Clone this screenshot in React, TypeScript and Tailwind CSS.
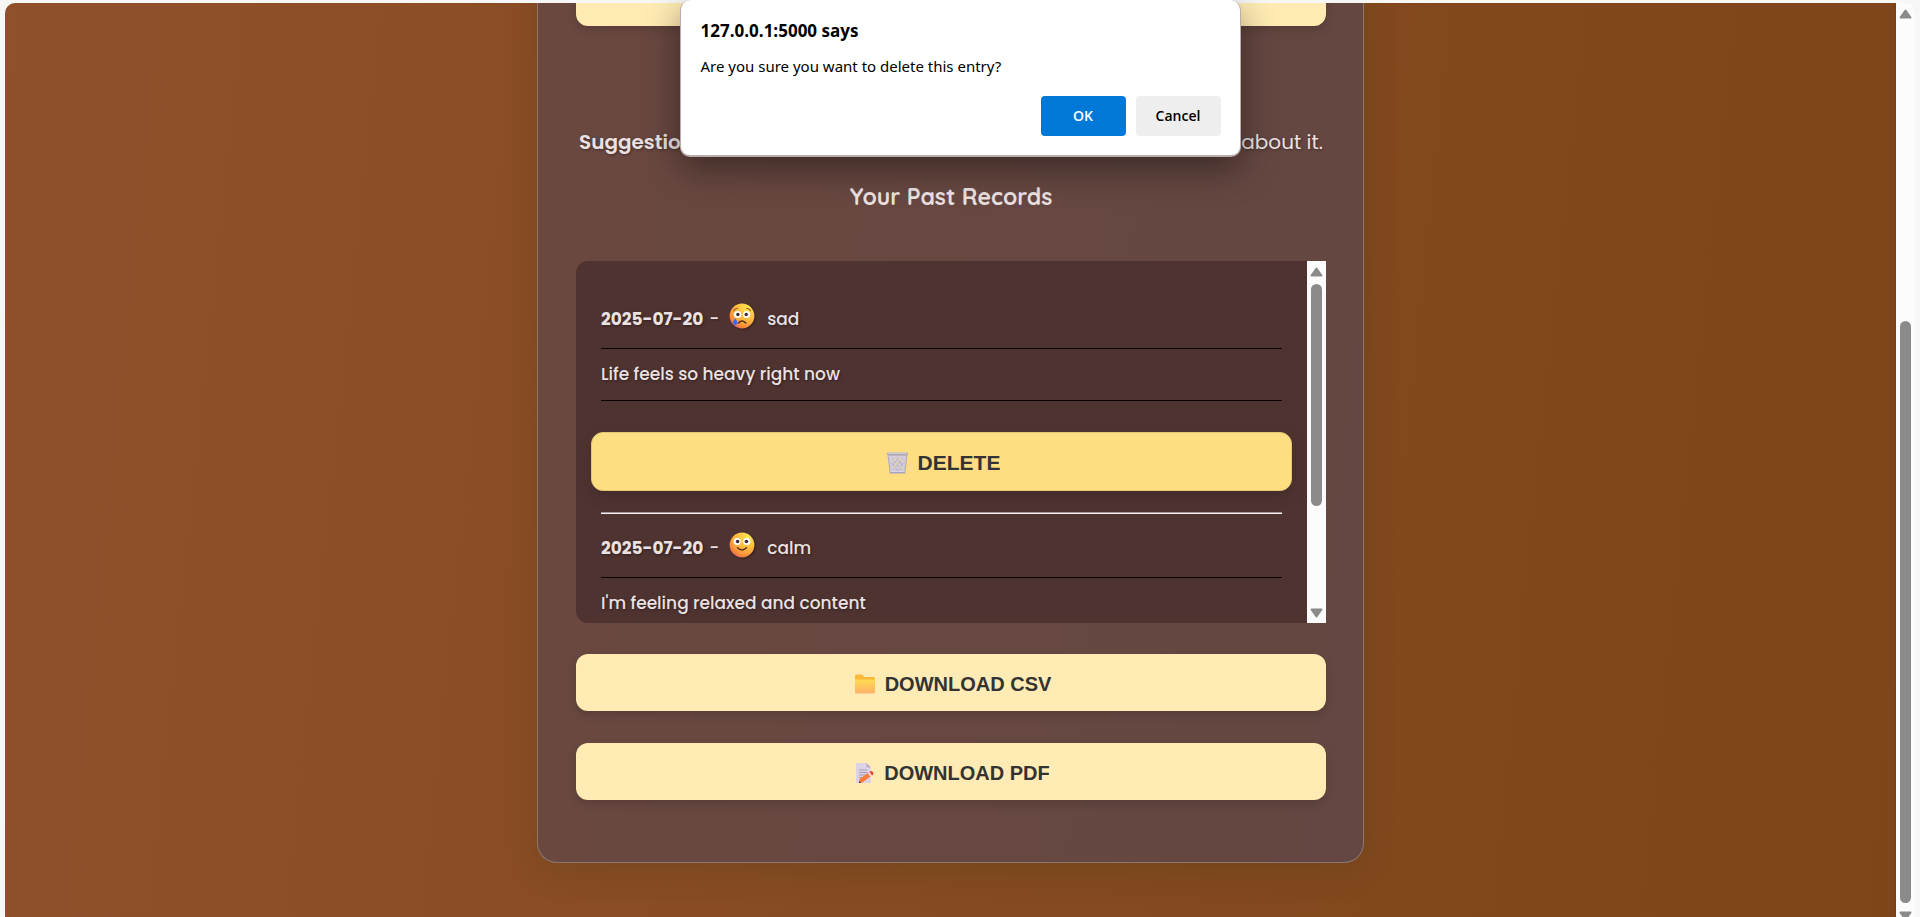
import type { ReactNode } from "react";

const bodyFont = "font-['Poppins','Inter',sans-serif]";

function ArrowUp() {
  return (
    <svg width="13" height="10" viewBox="0 0 13 10" className="shrink-0" aria-hidden="true">
      <path d="M6.500 1.500 11.500 8.500H1.500Z" fill="#8b8b8b" stroke="#8b8b8b" strokeWidth="2" strokeLinejoin="round" />
    </svg>
  );
}

function ArrowDown() {
  return (
    <svg width="13" height="10" viewBox="0 0 13 10" className="shrink-0" aria-hidden="true">
      <path d="M6.500 8.500 1.500 1.500h10Z" fill="#8b8b8b" stroke="#8b8b8b" strokeWidth="2" strokeLinejoin="round" />
    </svg>
  );
}

function Face({ mood }: { mood: "sad" | "calm" }) {
  const id = `face-${mood}`;
  return (
    <svg width="26" height="26" viewBox="0 0 26 26" className="drop-shadow-[1px_1px_1px_rgba(0,0,0,0.4)]" role="img" aria-label={mood}>
      <defs>
        <radialGradient id={id} cx="0.75" cy="0.15" r="1">
          <stop offset="0" stopColor="#ffe650" />
          <stop offset="0.6" stopColor="#ffae3b" />
          <stop offset="0.85" stopColor="#f5813f" />
          <stop offset="1" stopColor="#e0508a" />
        </radialGradient>
      </defs>
      <circle cx="13" cy="13" r="12.4" fill={`url(#${id})`} />
      {mood === "sad" ? (
        <>
          <circle cx="8.6" cy="11.5" r="3.6" fill="#fff" />
          <circle cx="17.5" cy="11.5" r="3.6" fill="#fff" />
          <circle cx="8.9" cy="11.5" r="1.7" fill="#402a32" />
          <circle cx="17.2" cy="11.5" r="1.7" fill="#402a32" />
          <path d="M4.6 7.6Q6 5.4 8.6 5.2M17.6 5.2q2.6.2 4 2.4" fill="none" stroke="#9a5a2a" strokeWidth="1.1" strokeLinecap="round" />
          <path d="M9.4 20Q13 16.2 16.8 20" fill="none" stroke="#5a2a20" strokeWidth="1.5" strokeLinecap="round" />
          <path d="M6.2 15.5q3 3.6 1.8 5.6-1.8 2-3.6 0-1.2-2 1.8-5.6Z" fill="#2f6bf2" />
        </>
      ) : (
        <>
          <circle cx="8.2" cy="9.5" r="3.6" fill="#fff" />
          <circle cx="17.8" cy="9.5" r="3.6" fill="#fff" />
          <circle cx="8.6" cy="9.5" r="1.8" fill="#402a32" />
          <circle cx="17.4" cy="9.5" r="1.8" fill="#402a32" />
          <path d="M8.5 15.8Q13 20 17.5 15.8" fill="none" stroke="#5a2a20" strokeWidth="1.4" strokeLinecap="round" />
        </>
      )}
    </svg>
  );
}

function Bin() {
  return (
    <svg width="21" height="22" viewBox="0 0 20 21" aria-hidden="true">
      <path d="M1 3h18l-2 17H3Z" fill="#d3ccda" />
      <path d="m5 6 9 11M9 5l6 8M4 10l6 8M15 6 6 17M11 5l-6 8M16 10l-6 8" stroke="#b3abc0" strokeWidth="0.8" />
      <path d="M6.5 7H8v1.800H6.500ZM12 7h1.500v1.800H12ZM9 10.300h1.500V12H9ZM6.500 13.500H8v1.800H6.500ZM12 13.500h1.500v1.800H12ZM9.200 5h1.300v1.300H9.200Z" fill="#f4dc96" />
      <path d="M1 3.500 3 19M19 3.500 17 19" stroke="#b0a8c2" strokeWidth="1" />
      <rect x="0" y="0.500" width="20" height="3" rx="1" fill="#b3abb8" />
      <rect x="1" y="0.500" width="18" height="1.200" rx="0.600" fill="#d5cedc" />
      <rect x="2.500" y="18" width="15" height="2.500" fill="#a9a0c6" />
      <rect x="3" y="18" width="14" height="1" fill="#e0dbe6" />
    </svg>
  );
}

function Folder() {
  return (
    <svg width="20" height="20" viewBox="0 0 20 20" aria-hidden="true">
      <defs>
        <linearGradient id="folder" x1="0" y1="0" x2="0" y2="1">
          <stop offset="0" stopColor="#ffda4e" />
          <stop offset="1" stopColor="#ffb169" />
        </linearGradient>
      </defs>
      <path d="M0 2q0-1.500 1.500-1.500H7L9.500 3H18.500Q20 3 20 4.500V10H0Z" fill="#fbb93c" />
      <path d="M0 5.500h20V18q0 1.500-1.500 1.500h-17Q0 19.500 0 18Z" fill="url(#folder)" />
    </svg>
  );
}

function Memo() {
  return (
    <svg width="18" height="20" viewBox="0 0 18 20" aria-hidden="true">
      <path d="M0 0h10.500L15 4.500V20H0Z" fill="#dcd3e6" />
      <path d="M10.500 0 15 4.500h-4.500Z" fill="#b9adc6" />
      <path d="M3 7h8M3 9.500h8.500M3 12h7M3 14.500h3" stroke="#a79cb6" strokeWidth="1" />
      <path d="m3.500 16 9-6.500 2.700 3.500-9 6.500L3 20Z" fill="#fc7b3d" />
      <path d="m11.600 10 1.600-1.200 2.800 3.700-1.600 1.200Z" fill="#f3d8dd" />
      <path d="m13.300 8.800q2-1.500 3.500.2t-.7 3.500Z" fill="#f8413f" />
      <path d="m3 20 .3-2 2 1.400Z" fill="#4a2b35" />
    </svg>
  );
}

function WideButton({ icon, label, children }: { icon?: ReactNode; label?: string; children?: ReactNode }) {
  return (
    <button
      type="button"
      aria-label={label}
      className="flex h-[57px] w-full shrink-0 items-center justify-center gap-[10px] rounded-xl bg-[#ffebb3] pt-0.5 pl-1 font-['Liberation_Sans',Arial,sans-serif] text-xl font-bold text-[#333] shadow-[0_4px_10px_rgba(0,0,0,0.15)]"
    >
      {icon}
      {children}
    </button>
  );
}

function EntryHead({ date, mood }: { date: string; mood: "sad" | "calm" }) {
  return (
    <div className="flex h-16 items-center border-b border-[#0d0202] pt-[6px]">
      <strong className="font-bold">{date}</strong>
      <span className="ml-[6px]">-</span>
      <span className="mr-3 ml-[10px] pb-2">
        <Face mood={mood} />
      </span>
      <span>{mood}</span>
    </div>
  );
}

export default function App() {
  return (
    <div className="flex h-screen flex-col overflow-hidden bg-[#f7f7f7] px-[5px] pt-[3px]">
      <div className="flex min-h-0 flex-1 overflow-hidden rounded-t-[10px]">
        <main
          className={`flex min-w-0 flex-1 flex-col items-center justify-end overflow-hidden bg-[linear-gradient(96deg,#90502b,#7d4519)] pb-[54px] text-[#ebe1e1] ${bodyFont}`}
        >
          <section className="flex w-full max-w-[827px] shrink-0 flex-col rounded-[20px] border border-white/25 bg-[linear-gradient(96deg,#6a4840,#644742)] pt-10 pr-[37px] pb-[62px] pl-[38px] shadow-[0_8px_32px_rgba(60,60,10,0.22)]">
            <WideButton label="Save entry" />
            <p className="mt-[100px] flex justify-between px-[3px] text-xl leading-8 text-shadow-[1px_1px_3px_rgba(0,0,0,0.4)]">
              <strong className="font-semibold">Suggestion:</strong>
              <span>about it.</span>
            </p>
            <h3 className="mt-[23px] text-center font-['Quicksand','Lato',sans-serif] text-[23px] leading-8 font-bold">Your Past Records</h3>

            <div className="mt-12 flex h-[362px] overflow-hidden rounded-l-xl bg-[#4f3331]">
              <div className="min-w-0 flex-1 overflow-hidden px-[25px] pt-6 text-[17px] font-medium text-shadow-[1px_1px_3px_rgba(0,0,0,0.4)]">
                <EntryHead date="2025-07-20" mood="sad" />
                <p className="border-b border-[#0d0202] py-3 leading-[27px]">Life feels so heavy right now</p>
                <div className="-mx-[10px] mt-[31px] mb-[21px]">
                  <button
                    type="button"
                    className="flex h-[59px] w-full items-center justify-center gap-[10px] rounded-xl border border-[#e3c873] bg-[#ffde82] pt-0.5 pl-1 font-['Liberation_Sans',Arial,sans-serif] text-[21px] font-bold text-[#333] shadow-[0_6px_14px_rgba(0,0,0,0.15)]"
                  >
                    <Bin />
                    DELETE
                  </button>
                </div>
                <hr className="h-[2px] border-0 border-t border-[#a89a9c] bg-[#f4f0f4]" />
                <EntryHead date="2025-07-20" mood="calm" />
                <p className="border-b border-[#0d0202] py-3 leading-[27px]">I'm feeling relaxed and content</p>
              </div>
              <div className="flex w-[19px] shrink-0 flex-col items-center bg-[#fcfcfc] pt-[6px] pb-[5px]">
                <ArrowUp />
                <div className="mt-[7px] h-[222px] w-[11px] rounded-full bg-[#8b8b8b]" />
                <div className="flex-1" />
                <ArrowDown />
              </div>
            </div>

            <div className="mt-[31px] flex flex-col gap-8">
              <WideButton icon={<Folder />}>DOWNLOAD CSV</WideButton>
              <WideButton icon={<Memo />}>DOWNLOAD PDF</WideButton>
            </div>
          </section>
        </main>

        <div className="flex w-[19px] shrink-0 flex-col items-center bg-[#fcfcfc] pt-[6px] shadow-[0_0_2px_rgba(0,0,0,0.2)]">
          <ArrowUp />
          <div className="flex-[302]" />
          <div className="w-[11px] flex-[582] rounded-full bg-[#8b8b8b]" />
          <div className="mt-2 h-[6px] overflow-hidden">
            <ArrowDown />
          </div>
        </div>
      </div>

      <div
        role="dialog"
        aria-labelledby="dialog-title"
        className="absolute inset-x-0 top-0 mx-auto w-[561px] rounded-[10px] border border-t-0 border-b-2 border-[#b9adab] bg-white pt-[17px] pr-[19px] pb-[19px] pl-5 font-['Open_Sans','Segoe_UI',sans-serif] text-black shadow-[0_12px_36px_rgba(0,0,0,0.42)]"
      >
        <h2 id="dialog-title" className="text-[17px] leading-7 font-bold">
          127.0.0.1:5000 says
        </h2>
        <p className="mt-[7px] font-['Noto_Sans','Segoe_UI',sans-serif] text-[15px] leading-7">Are you sure you want to delete this entry?</p>
        <div className="mt-4 flex justify-end gap-[10px] text-sm font-semibold">
          <button type="button" className="h-10 w-[85px] rounded-[4px] bg-[#0078d7] text-white">
            OK
          </button>
          <button type="button" className="h-10 w-[85px] rounded-[4px] bg-[#eee]">
            Cancel
          </button>
        </div>
      </div>
    </div>
  );
}
